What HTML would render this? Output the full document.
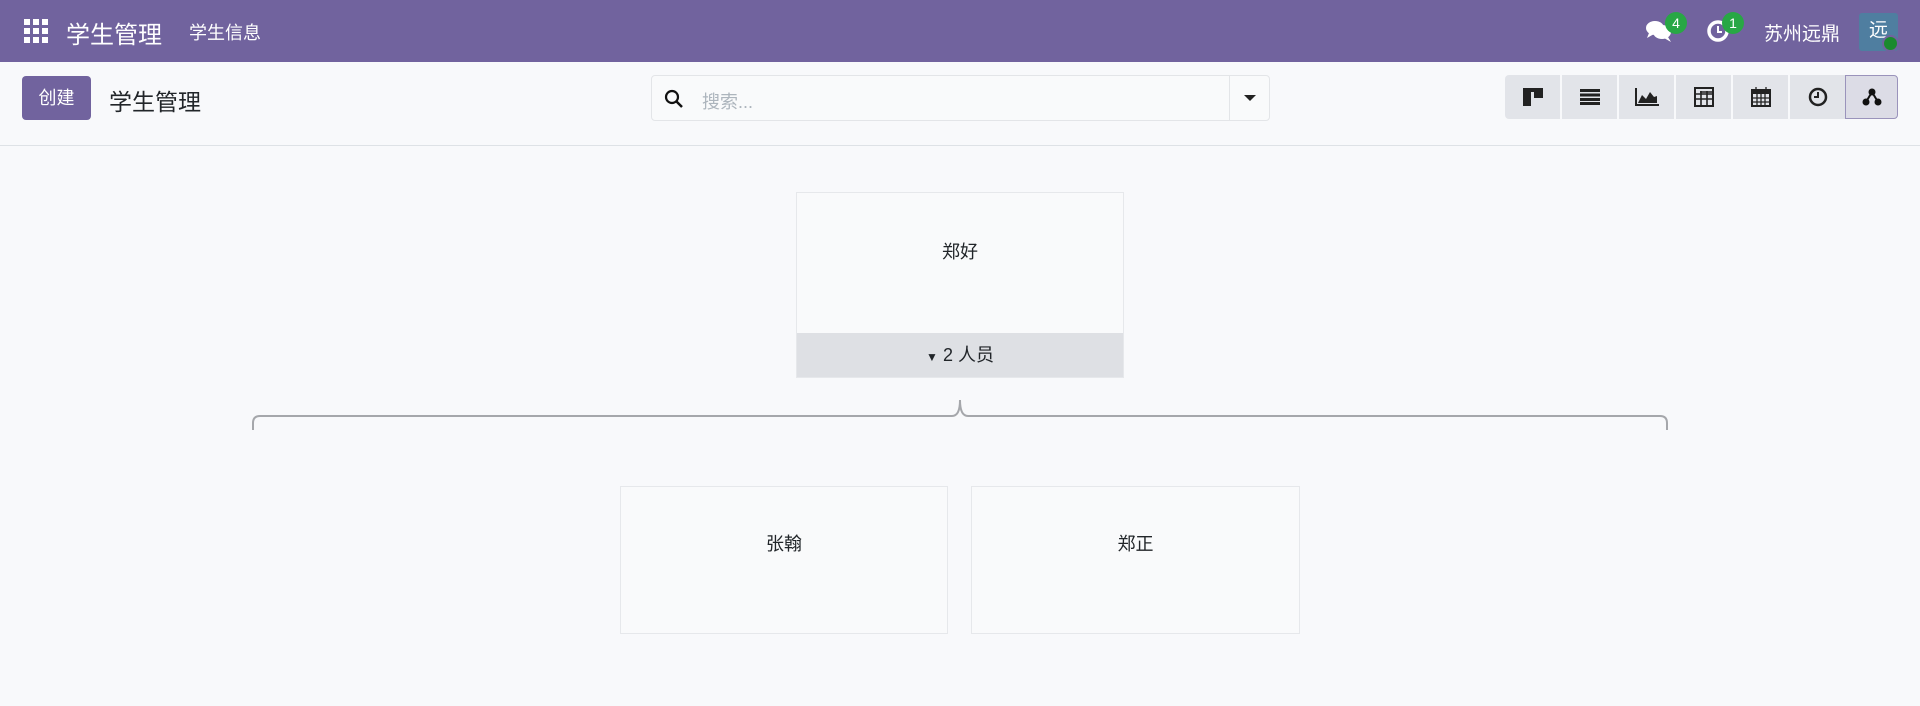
<!DOCTYPE html>
<html><head><meta charset="utf-8"><style>
*{box-sizing:border-box;margin:0;padding:0}
body{width:1920px;height:706px;background:#f8f9fb;font-family:"Liberation Sans","Noto Sans CJK SC",sans-serif;position:relative;overflow:hidden;color:#212529}
.nav{position:absolute;left:0;top:0;width:1920px;height:62px;background:#71639e;color:#fff}
.a{position:absolute}
.cp{position:absolute;top:62px;left:0;width:1920px;height:84px;border-bottom:1px solid #dee2e6;background:#f8f9fb}
.vb{position:absolute;top:75px;height:44px;width:55px;background:#e2e4e9;display:flex;align-items:center;justify-content:center}
.card{position:absolute;background:#f9fafb;border:1px solid #e6e8eb;text-align:center;font-size:18px}
.badge{position:absolute;background:#28a745;color:#fff;border-radius:11px;font-size:14px;width:22px;height:22px;text-align:center;line-height:22px}
</style></head><body>
<div class="nav">
 <svg class="a" style="left:24px;top:19px" width="24" height="24" viewBox="0 0 24 24" fill="#fff">
  <rect x="0" y="0" width="6" height="6"/><rect x="9" y="0" width="6" height="6"/><rect x="18" y="0" width="6" height="6"/>
  <rect x="0" y="9" width="6" height="6"/><rect x="9" y="9" width="6" height="6"/><rect x="18" y="9" width="6" height="6"/>
  <rect x="0" y="18" width="6" height="6"/><rect x="9" y="18" width="6" height="6"/><rect x="18" y="18" width="6" height="6"/></svg>
 <div class="a" style="left:66px;top:15px;font-size:24px">学生管理</div>
 <div class="a" style="left:189px;top:19px;font-size:18px">学生信息</div>
 <svg class="a" style="left:1646px;top:20px" width="26" height="22" viewBox="0 0 26 22" fill="#fff"><ellipse cx="9" cy="8" rx="9" ry="7"/><path d="M3 13 L1 18 L8 14Z"/><ellipse cx="16" cy="12" rx="9" ry="7"/><path d="M22 17 L25 22 L18 18Z"/></svg>
 <div class="badge" style="left:1665px;top:12px">4</div>
 <svg class="a" style="left:1706px;top:19px" width="24" height="24" viewBox="0 0 24 24"><circle cx="12" cy="12" r="9" fill="none" stroke="#fff" stroke-width="3.5"/><path d="M12 7v6h4" stroke="#fff" stroke-width="2" fill="none"/></svg>
 <div class="badge" style="left:1722px;top:12px">1</div>
 <div class="a" style="left:1764px;top:19px;font-size:19px">苏州远鼎</div>
 <div class="a" style="left:1859px;top:13px;width:39px;height:38px;background:#4f7ea0;border-radius:3px;font-size:19px;text-align:center;line-height:36px">远</div>
 <div class="a" style="left:1882px;top:35px;width:17px;height:17px;border-radius:50%;background:#1a8a2e;border:2px solid #71639e"></div>
</div>
<div class="cp"></div>
<div class="a" style="left:22px;top:76px;width:69px;height:44px;background:#71639e;border-radius:4px;color:#fff;font-size:18px;text-align:center;line-height:44px">创建</div>
<div class="a" style="left:109px;top:83px;font-size:23px">学生管理</div>
<div class="a" style="left:651px;top:75px;width:619px;height:46px;background:#f9fafb;border:1px solid #e3e5e8;border-radius:4px"></div>
<svg class="a" style="left:664px;top:89px" width="20" height="20" viewBox="0 0 20 20"><circle cx="8" cy="8" r="6" fill="none" stroke="#111" stroke-width="2.2"/><path d="M12.5 12.5L18 18" stroke="#111" stroke-width="2.5"/></svg>
<div class="a" style="left:702px;top:88px;font-size:18px;color:#adb5bd">搜索...</div>
<div class="a" style="left:1229px;top:76px;width:1px;height:44px;background:#e3e5e8"></div>
<div class="a" style="left:1244px;top:95px;border-left:6px solid transparent;border-right:6px solid transparent;border-top:6px solid #222"></div>
<div class="vb" style="left:1505px;border-radius:4px 0 0 4px"><svg width="20" height="20"><rect x="0" y="1" width="20" height="4" fill="#222"/><rect x="0" y="1" width="8" height="18" fill="#222"/><rect x="11" y="5" width="9" height="6" fill="#222"/></svg></div>
<div class="vb" style="left:1562px"><svg width="20" height="16"><rect y="0" width="20" height="3" fill="#222"/><rect y="4.5" width="20" height="3" fill="#222"/><rect y="9" width="20" height="3" fill="#222"/><rect y="13" width="20" height="3" fill="#222"/></svg></div>
<div class="vb" style="left:1619px"><svg width="24" height="18"><path d="M1 0V17H24" stroke="#222" stroke-width="2" fill="none"/><path d="M3 15L7 7L11 11L15 4L19 9L22 8V15Z" fill="#222"/></svg></div>
<div class="vb" style="left:1676px"><svg width="20" height="20"><rect x="1" y="1" width="18" height="18" fill="none" stroke="#222" stroke-width="2"/><path d="M1 7H19M1 12H19M7 4V19M13 4V19M6 1H19V5H6" stroke="#222" stroke-width="1.6" fill="none"/></svg></div>
<div class="vb" style="left:1733px"><svg width="20" height="20"><rect x="1" y="3" width="18" height="16" fill="none" stroke="#222" stroke-width="2"/><rect x="1" y="3" width="18" height="4" fill="#222"/><path d="M5 0V5M15 0V5M1 11H19M1 15H19M6 7V19M10 7V19M14 7V19" stroke="#222" stroke-width="1.3"/></svg></div>
<div class="vb" style="left:1790px"><svg width="20" height="20"><circle cx="10" cy="10" r="8" fill="none" stroke="#222" stroke-width="2.5"/><path d="M10 5V10H6" stroke="#222" stroke-width="2" fill="none"/></svg></div>
<div class="vb" style="left:1845px;width:53px;background:#dcdce6;border:1px solid #9a93bb;border-radius:0 4px 4px 0"><svg width="20" height="18"><circle cx="10" cy="4" r="3.5" fill="#111"/><circle cx="4" cy="14" r="3.5" fill="#111"/><circle cx="16" cy="14" r="3.5" fill="#111"/><path d="M10 4L4 14M10 4L16 14" stroke="#111" stroke-width="2"/></svg></div>

<div class="card" style="left:796px;top:192px;width:328px;height:186px">
 <div style="margin-top:45px">郑好</div>
 <div style="position:absolute;left:0;right:0;bottom:0;height:44px;background:#dee0e4;line-height:44px;font-size:18px"><span style="font-size:12px">▼</span> 2 人员</div>
</div>
<svg class="a" style="left:240px;top:395px" width="1440" height="40"><path d="M13 35V28Q13 21 20 21H712Q720 21 720 5Q720 21 728 21H1420Q1427 21 1427 28V35" fill="none" stroke="#a5a7ab" stroke-width="2"/></svg>
<div class="card" style="left:620px;top:486px;width:328px;height:148px"><div style="margin-top:43px">张翰</div></div>
<div class="card" style="left:971px;top:486px;width:329px;height:148px"><div style="margin-top:43px">郑正</div></div>
</body></html>
